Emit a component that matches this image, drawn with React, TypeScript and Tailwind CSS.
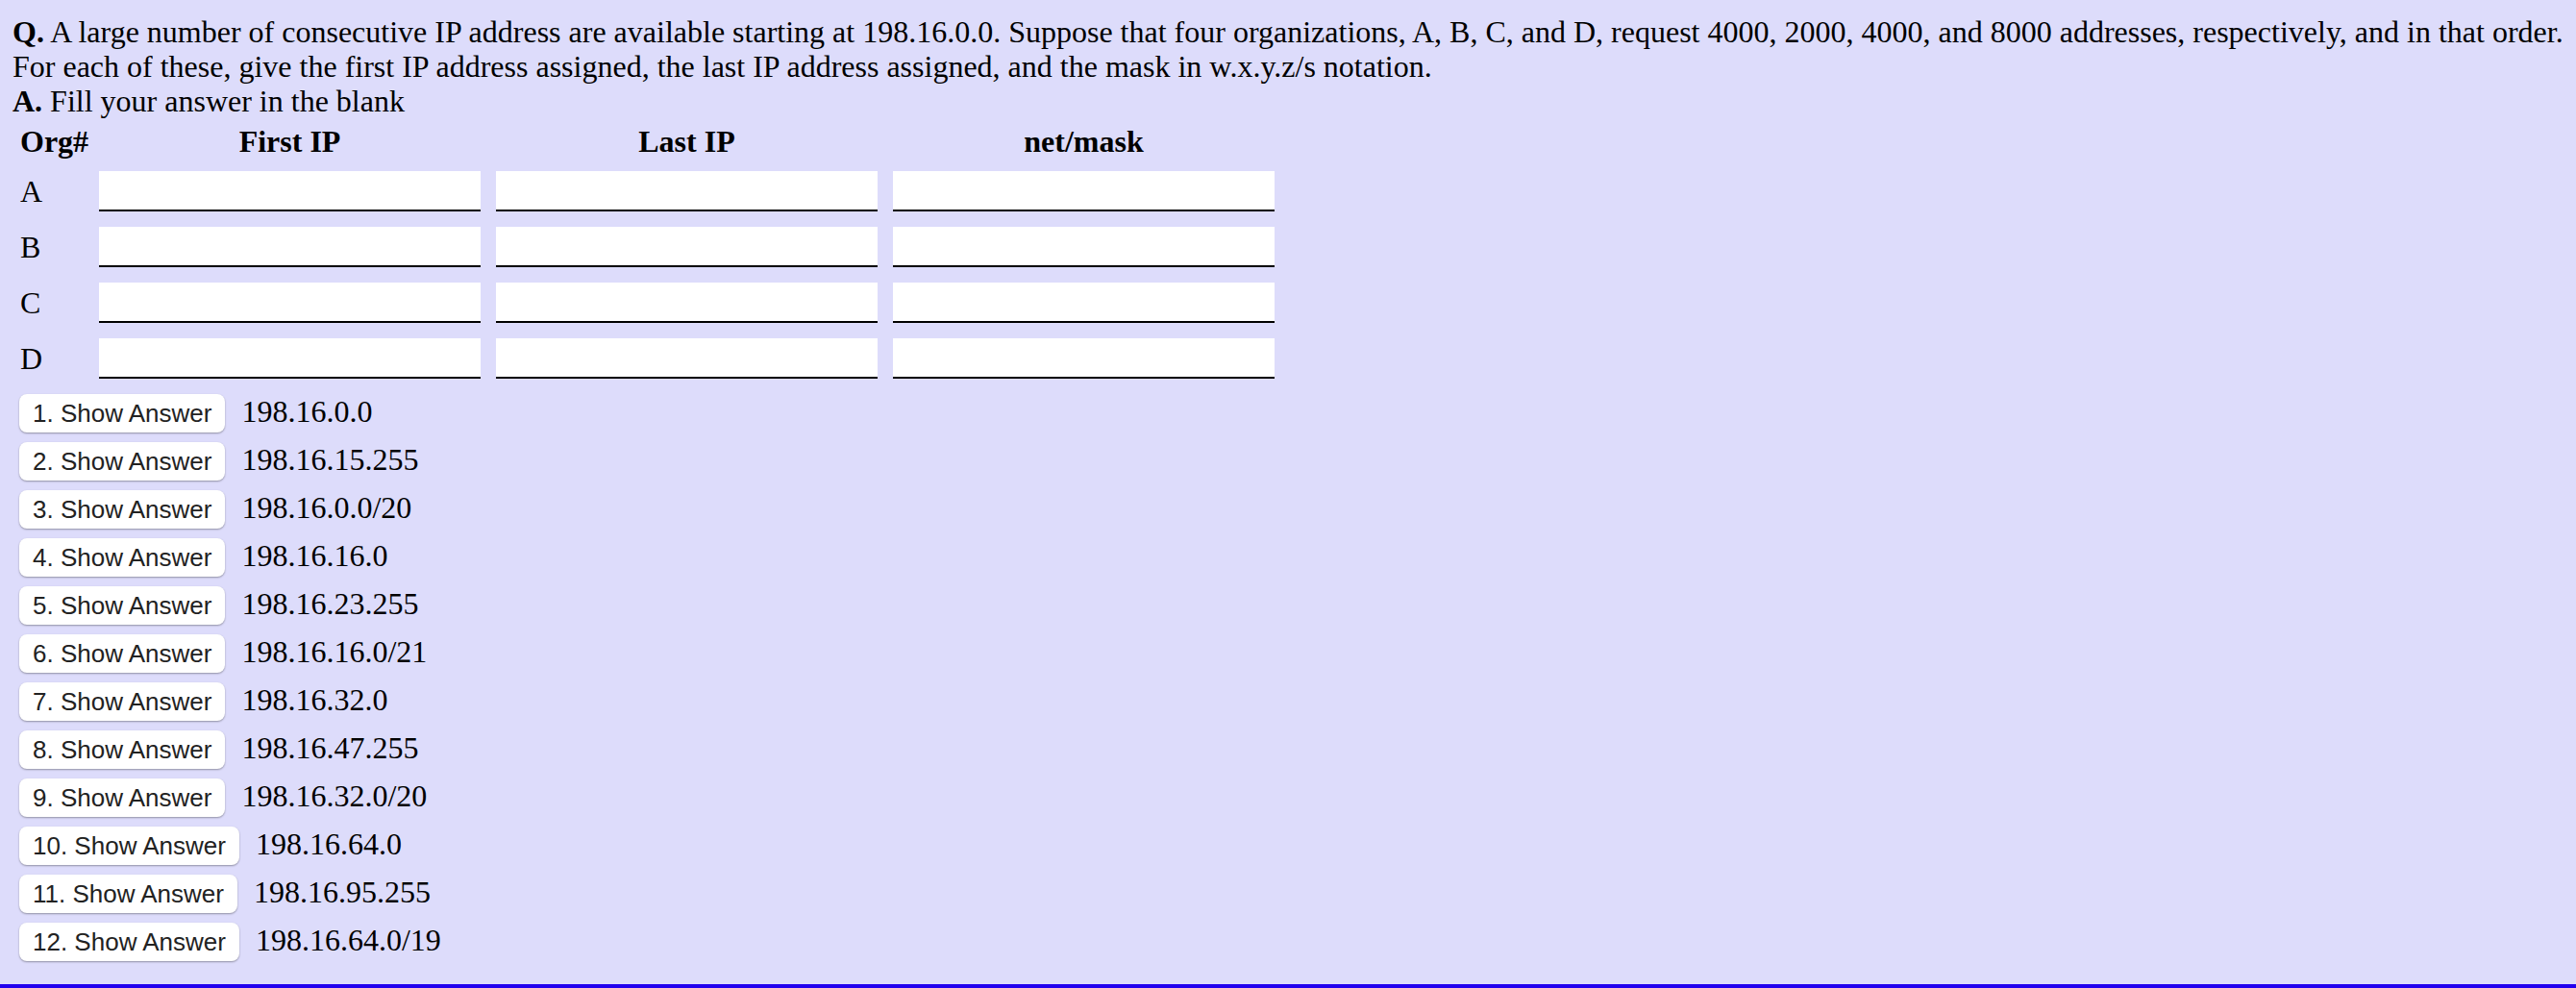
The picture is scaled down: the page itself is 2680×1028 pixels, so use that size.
import { useState } from "react";

const orgs = ["A", "B", "C", "D"];

const answers = [
  "198.16.0.0",
  "198.16.15.255",
  "198.16.0.0/20",
  "198.16.16.0",
  "198.16.23.255",
  "198.16.16.0/21",
  "198.16.32.0",
  "198.16.47.255",
  "198.16.32.0/20",
  "198.16.64.0",
  "198.16.95.255",
  "198.16.64.0/19"
];

export default function App() {
  const [shown, setShown] = useState<boolean[]>(answers.map(() => true));

  function toggle(index: number) {
    setShown((current) => current.map((value, i) => (i === index ? !value : value)));
  }

  return (
    <div className="box-border h-[1028px] overflow-hidden border-b-4 border-[#2200ee] bg-[#dddcfb] pl-[13px] pt-[15px] font-['Liberation_Serif',serif] text-[32px] leading-[36px] text-black">
      <p className="whitespace-nowrap">
        <b>Q.</b> A large number of consecutive IP address are available starting at 198.16.0.0. Suppose that four
        organizations, A, B, C, and D, request 4000, 2000, 4000, and 8000 addresses, respectively, and in that order.
        <br />
        For each of these, give the first IP address assigned, the last IP address assigned, and the mask in w.x.y.z/s
        notation.
      </p>
      <p>
        <b>A.</b> Fill your answer in the blank
      </p>

      <div className="mt-[6px] grid grid-cols-[74px_397px_397px_397px] gap-x-4">
        <div className="pl-2 font-bold">Org#</div>
        <div className="text-center font-bold">First IP</div>
        <div className="text-center font-bold">Last IP</div>
        <div className="text-center font-bold">net/mask</div>
      </div>

      <div className="mt-[5px] grid grid-cols-[74px_397px_397px_397px] gap-x-4">
        {orgs.map((org) => (
          <div key={org} className="contents">
            <div className="flex h-[58px] items-center pl-2">{org}</div>
            {[0, 1, 2].map((col) => (
              <div key={col} className="flex h-[58px] items-center">
                <input
                  type="text"
                  className="box-border h-[42px] w-full border-0 border-b-2 border-black bg-white px-1 font-['Liberation_Serif',serif] text-[28px] outline-none"
                />
              </div>
            ))}
          </div>
        ))}
      </div>

      <div className="mt-[8px] flex flex-col gap-[10px] pl-[7px]">
        {answers.map((answer, index) => (
          <div key={index} className="flex h-[40px] items-baseline gap-[17px]">
            <button
              type="button"
              onClick={() => toggle(index)}
              className="box-border flex h-[40px] items-center rounded-[8px] bg-white px-[14px] font-['Liberation_Sans',sans-serif] text-[26px] leading-none text-[#222] shadow-[0_1px_2px_rgba(0,0,0,0.35)]"
            >
              {index + 1}. Show Answer
            </button>
            {shown[index] ? <span>{answer}</span> : null}
          </div>
        ))}
      </div>
    </div>
  );
}
